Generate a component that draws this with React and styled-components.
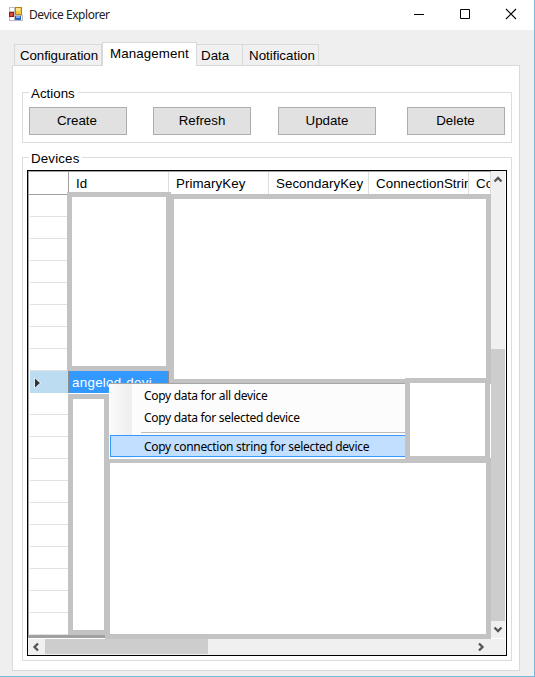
import React from "react";
import styled, { createGlobalStyle } from "styled-components";

const GlobalStyle = createGlobalStyle`
  *, *::before, *::after { box-sizing: border-box; }
  body { margin: 0; overflow: hidden; background: #fff; }
`;

const Window = styled.main`
  position: relative;
  display: flex;
  flex-direction: column;
  width: 535px;
  height: 677px;
  background: #efefef;
  border-right: 1px solid #76b9de;
  border-bottom: 1px solid #76b9de;
  font-family: "Liberation Sans", Arial, sans-serif;
  font-size: 13.33px;
  color: #000;
  white-space: nowrap;
`;

const TitleBar = styled.header`
  display: flex;
  align-items: center;
  flex: none;
  height: 30px;
  padding: 0 0 2px 9px;
  background: #fff;
`;

const Title = styled.h1`
  flex: 1;
  margin: 1px 0 0 6px;
  font: 400 12px/16px "Noto Sans", sans-serif;
  letter-spacing: -0.45px;
  color: #222;
`;

const CaptionButtons = styled.div`
  display: grid;
  grid-template-columns: repeat(3, 46px);
  justify-items: center;
  width: 138px;
`;

const TabControl = styled.section`
  display: flex;
  flex-direction: column;
  width: 508px;
  height: 629px;
  margin: 12px 0 0 12px;
`;

const TabStrip = styled.nav`
  display: flex;
  align-items: flex-end;
  height: 23px;
  padding-left: 2px;
`;

const Tab = styled.div`
  width: ${(p) => p.$w}px;
  height: ${(p) => (p.$active ? 24 : 21)}px;
  margin-bottom: ${(p) => (p.$active ? -1 : 0)}px;
  padding-left: ${(p) => p.$pad}px;
  line-height: ${(p) => (p.$active ? 22 : 21)}px;
  border: 1px solid #d9d9d9;
  border-bottom: 0;
  border-left-width: ${(p) => (p.$joined ? 0 : 1)}px;
  background: ${(p) => (p.$active ? "#fff" : "#f0f0f0")};
  letter-spacing: ${(p) => p.$ls || 0}px;
  z-index: ${(p) => (p.$active ? 1 : 0)};
`;

const TabPage = styled.div`
  flex: 1;
  padding: 20px 7px 0 9px;
  border: 1px solid #d9d9d9;
  background: #fff;
`;

const Group = styled.fieldset`
  min-width: 0;
  width: 490px;
  height: ${(p) => p.$h}px;
  margin: 0 0 ${(p) => p.$gap || 0}px;
  padding: ${(p) => p.$pad};
  border: 1px solid #dcdcdc;
`;

const Legend = styled.legend`
  height: 13px;
  margin-left: ${(p) => p.$ml}px;
  padding: 0 3px 0 2px;
  line-height: 15px;
  letter-spacing: ${(p) => p.$ls || 0}px;
`;

const Actions = styled.div`
  display: grid;
  grid-template-columns: repeat(4, 98px);
  justify-content: space-between;
`;

const Button = styled.button`
  position: relative;
  left: ${(p) => p.$nudge || 0}px;
  height: 28px;
  padding: 0 ${(p) => p.$shift || 0}px 0 0;
  border: 1px solid #adadad;
  background: #e1e1e1;
  color: #000;
  font: inherit;
  line-height: 26px;
`;

const DataGrid = styled.div`
  position: relative;
  display: grid;
  grid-template-columns: 463px 14px;
  grid-template-rows: 467px 17px;
  width: 480px;
  height: 486px;
  border: 1px solid #000;
  background: #fff;
  overflow: hidden;
`;

const Table = styled.div`
  border-top: 1px solid #a0a0a0;
  border-left: 1px solid #a0a0a0;
  border-bottom: 3px solid #a0a0a0;
  overflow: hidden;
`;

const Row = styled.div`
  display: grid;
  grid-template-columns: 39px 462px;
  height: 22px;
`;

const HeaderRow = styled.div`
  display: grid;
  grid-template-columns: 40px repeat(4, 100px) 22px;
  height: 23px;
  border-bottom: 1px solid #a0a0a0;
`;

const HeaderCell = styled.div`
  padding-left: 7px;
  line-height: 24px;
  border-right: 1px solid ${(p) => (p.$dark ? "#a0a0a0" : "#dedede")};
  overflow: hidden;
  letter-spacing: ${(p) => p.$ls ?? 0.05}px;
`;

const RowHeader = styled.div`
  display: flex;
  align-items: center;
  margin-left: 1px;
  padding-left: 4px;
  border-bottom: 1px solid ${(p) => (p.$selected ? "#bcdcf2" : "#e2e2e2")};
  background: ${(p) => (p.$selected ? "#bcdcf2" : "#fff")};
`;

const IdCell = styled.div`
  width: 101px;
  padding-left: 3px;
  line-height: 24px;
  background: ${(p) => (p.$selected ? "#3399ff" : "#fff")};
  border: solid #8c8c8c;
  border-width: ${(p) => (p.$selected ? "0 1px 1px" : "0")};
  color: #fff;
  letter-spacing: 0.3px;
`;

const VerticalBar = styled.div`
  display: grid;
  grid-template-rows: 178px 272px 17px;
  justify-items: center;
  background: #f0f0f0;
`;

const HorizontalBar = styled.div`
  grid-column: 1 / 3;
  display: grid;
  grid-template-columns: 17px 163px 1fr 35px;
  align-items: center;
  padding-bottom: 1px;
  border-top: 1px solid #fff;
  background: #f0f0f0;
`;

const Thumb = styled.div`
  width: 100%;
  height: 100%;
  background: #cdcdcd;
`;

const Arrow = styled.svg`
  display: block;
  justify-self: ${(p) => p.$align || "center"};
  margin: ${(p) => p.$m || 0};
`;

const Redaction = styled.div`
  position: absolute;
  left: ${(p) => p.$x}px;
  top: ${(p) => p.$y}px;
  width: ${(p) => p.$w}px;
  height: ${(p) => p.$h}px;
  border: 5px solid #c3c3c3;
  background: #fff;
`;

const ContextMenu = styled.div`
  position: absolute;
  left: 109px;
  top: 383px;
  width: 298px;
  height: 76px;
  padding: 2px 0 1px 1px;
  border-top: 1px solid #a5a5a5;
  border-bottom: 1px solid #fff;
  background: linear-gradient(90deg, #fcfcfc 0, #f8f8f8 5px, #eeeeee 23px, #fcfcfc 23px);
  font: 12px/22px "Noto Sans", sans-serif;
`;

const MenuItem = styled.div`
  height: 22px;
  padding-left: ${(p) => (p.$active ? 33 : 34)}px;
  line-height: ${(p) => (p.$active ? 21 : 19)}px;
  border: ${(p) => (p.$active ? "1px solid #3399ff" : "0")};
  background: ${(p) => (p.$active ? "#c2dfff" : "transparent")};
  letter-spacing: -0.3px;
`;

const Separator = styled.div`
  height: 1px;
  margin: 2px 0 2px 31px;
  background: #bdbdbd;
`;

const AppIcon = () => (
  <svg width="14" height="14" viewBox="0 0 14 14">
    <path fill="#b9bcc0" d="M0 0H6V14H0ZM6 8H14V14H6Z" />
    <path fill="#fff" d="M1 1H5V4H1ZM1 10H5V13H1ZM12 9H13V13H12Z" />
    <path fill="#9b1712" d="M0 5H5V10H0Z" />
    <path fill="#d84a40" d="M1 6H4V9H1Z" />
    <path fill="#b78412" d="M6 0H13V8H6Z" />
    <path fill="#f2c63f" d="M7 1H12V7H7Z" />
    <path fill="#fae38e" d="M7 1H11V4H7Z" />
    <path fill="#2c5fc0" d="M6 9H12V13H6Z" />
    <path fill="#79a9ee" d="M7 9H11V11H7Z" />
  </svg>
);

const ROWS = Array.from({ length: 20 }, (_, i) => i);
const SELECTED = 8;

export default function App() {
  return (
    <>
      <GlobalStyle />
      <Window>
        <TitleBar>
          <AppIcon />
          <Title>Device Explorer</Title>
          <CaptionButtons>
            <svg width="12" height="12" viewBox="0 0 12 12"><path d="M1 6.5H11" stroke="#000" /></svg>
            <svg width="12" height="12" viewBox="0 0 12 12"><path d="M1.5 1.5H10.5V10.5H1.5Z" fill="none" stroke="#000" /></svg>
            <svg width="12" height="12" viewBox="0 0 12 12"><path d="M1 1L11 11M11 1L1 11" stroke="#000" strokeWidth="1.1" /></svg>
          </CaptionButtons>
        </TitleBar>

        <TabControl>
          <TabStrip>
            <Tab $w={88} $pad={5} $ls={-0.1}>Configuration</Tab>
            <Tab $w={95} $pad={7} $active $ls={0.1}>Management</Tab>
            <Tab $w={46} $pad={4} $joined>Data</Tab>
            <Tab $w={76} $pad={6} $joined>Notification</Tab>
          </TabStrip>
          <TabPage>
            <Group $h={57} $gap={8} $pad="8px 6px 0">
              <Legend $ml={0}>Actions</Legend>
              <Actions>
                <Button $shift={2}>Create</Button>
                <Button $nudge={-2}>Refresh</Button>
                <Button $nudge={-3}>Update</Button>
                <Button $shift={1}>Delete</Button>
              </Actions>
            </Group>
            <Group $h={510} $pad="6px 4px 0">
              <Legend $ml={2} $ls={0.15}>Devices</Legend>
              <DataGrid>
                <Table>
                  <HeaderRow>
                    <HeaderCell $dark />
                    <HeaderCell>Id</HeaderCell>
                    <HeaderCell>PrimaryKey</HeaderCell>
                    <HeaderCell>SecondaryKey</HeaderCell>
                    <HeaderCell>ConnectionString</HeaderCell>
                    <HeaderCell>Connection</HeaderCell>
                  </HeaderRow>
                  {ROWS.map((i) => (
                    <Row key={i}>
                      <RowHeader $selected={i === SELECTED}>
                        {i === SELECTED && (
                          <svg width="8" height="12" viewBox="0 0 8 12">
                            <path d="M0.5 0.5L7 6L0.5 11.5Z" fill="#fff" />
                            <path d="M1 1.5L6 6L1 10.5Z" fill="#333" />
                          </svg>
                        )}
                      </RowHeader>
                      <IdCell $selected={i === SELECTED}>{i === SELECTED ? "angelod-devi..." : ""}</IdCell>
                    </Row>
                  ))}
                </Table>
                <VerticalBar>
                  <Arrow width="10" height="8" viewBox="0 0 10 8" $m="4px 0 0">
                    <path d="M1.5 6.5L5 3L8.5 6.5" fill="none" stroke="#555" strokeWidth="2.3" />
                  </Arrow>
                  <Thumb />
                  <Arrow width="10" height="8" viewBox="0 0 10 8" $m="5px 0 0">
                    <path d="M1.5 1.5L5 5L8.5 1.5" fill="none" stroke="#555" strokeWidth="2.3" />
                  </Arrow>
                </VerticalBar>
                <HorizontalBar>
                  <Arrow width="8" height="10" viewBox="0 0 8 10" $m="0 1px 0 0">
                    <path d="M6 1.5L2.5 5L6 8.5" fill="none" stroke="#555" strokeWidth="2.3" />
                  </Arrow>
                  <Thumb />
                  <span />
                  <Arrow width="8" height="10" viewBox="0 0 8 10" $align="start" $m="0 0 0 7px">
                    <path d="M2 1.5L5.5 5L2 8.5" fill="none" stroke="#555" strokeWidth="2.3" />
                  </Arrow>
                </HorizontalBar>
              </DataGrid>
            </Group>
          </TabPage>
        </TabControl>

        <Redaction $x={169} $y={194} $w={322} $h={190} />
        <Redaction $x={67} $y={192} $w={104} $h={179} />
        <Redaction $x={68} $y={394} $w={41} $h={241} />
        <Redaction $x={105} $y={458} $w={386} $h={181} />
        <ContextMenu>
          <MenuItem>Copy data for all device</MenuItem>
          <MenuItem>Copy data for selected device</MenuItem>
          <Separator />
          <MenuItem $active>Copy connection string for selected device</MenuItem>
        </ContextMenu>
        <Redaction $x={405} $y={378} $w={85} $h={83} />
      </Window>
    </>
  );
}
